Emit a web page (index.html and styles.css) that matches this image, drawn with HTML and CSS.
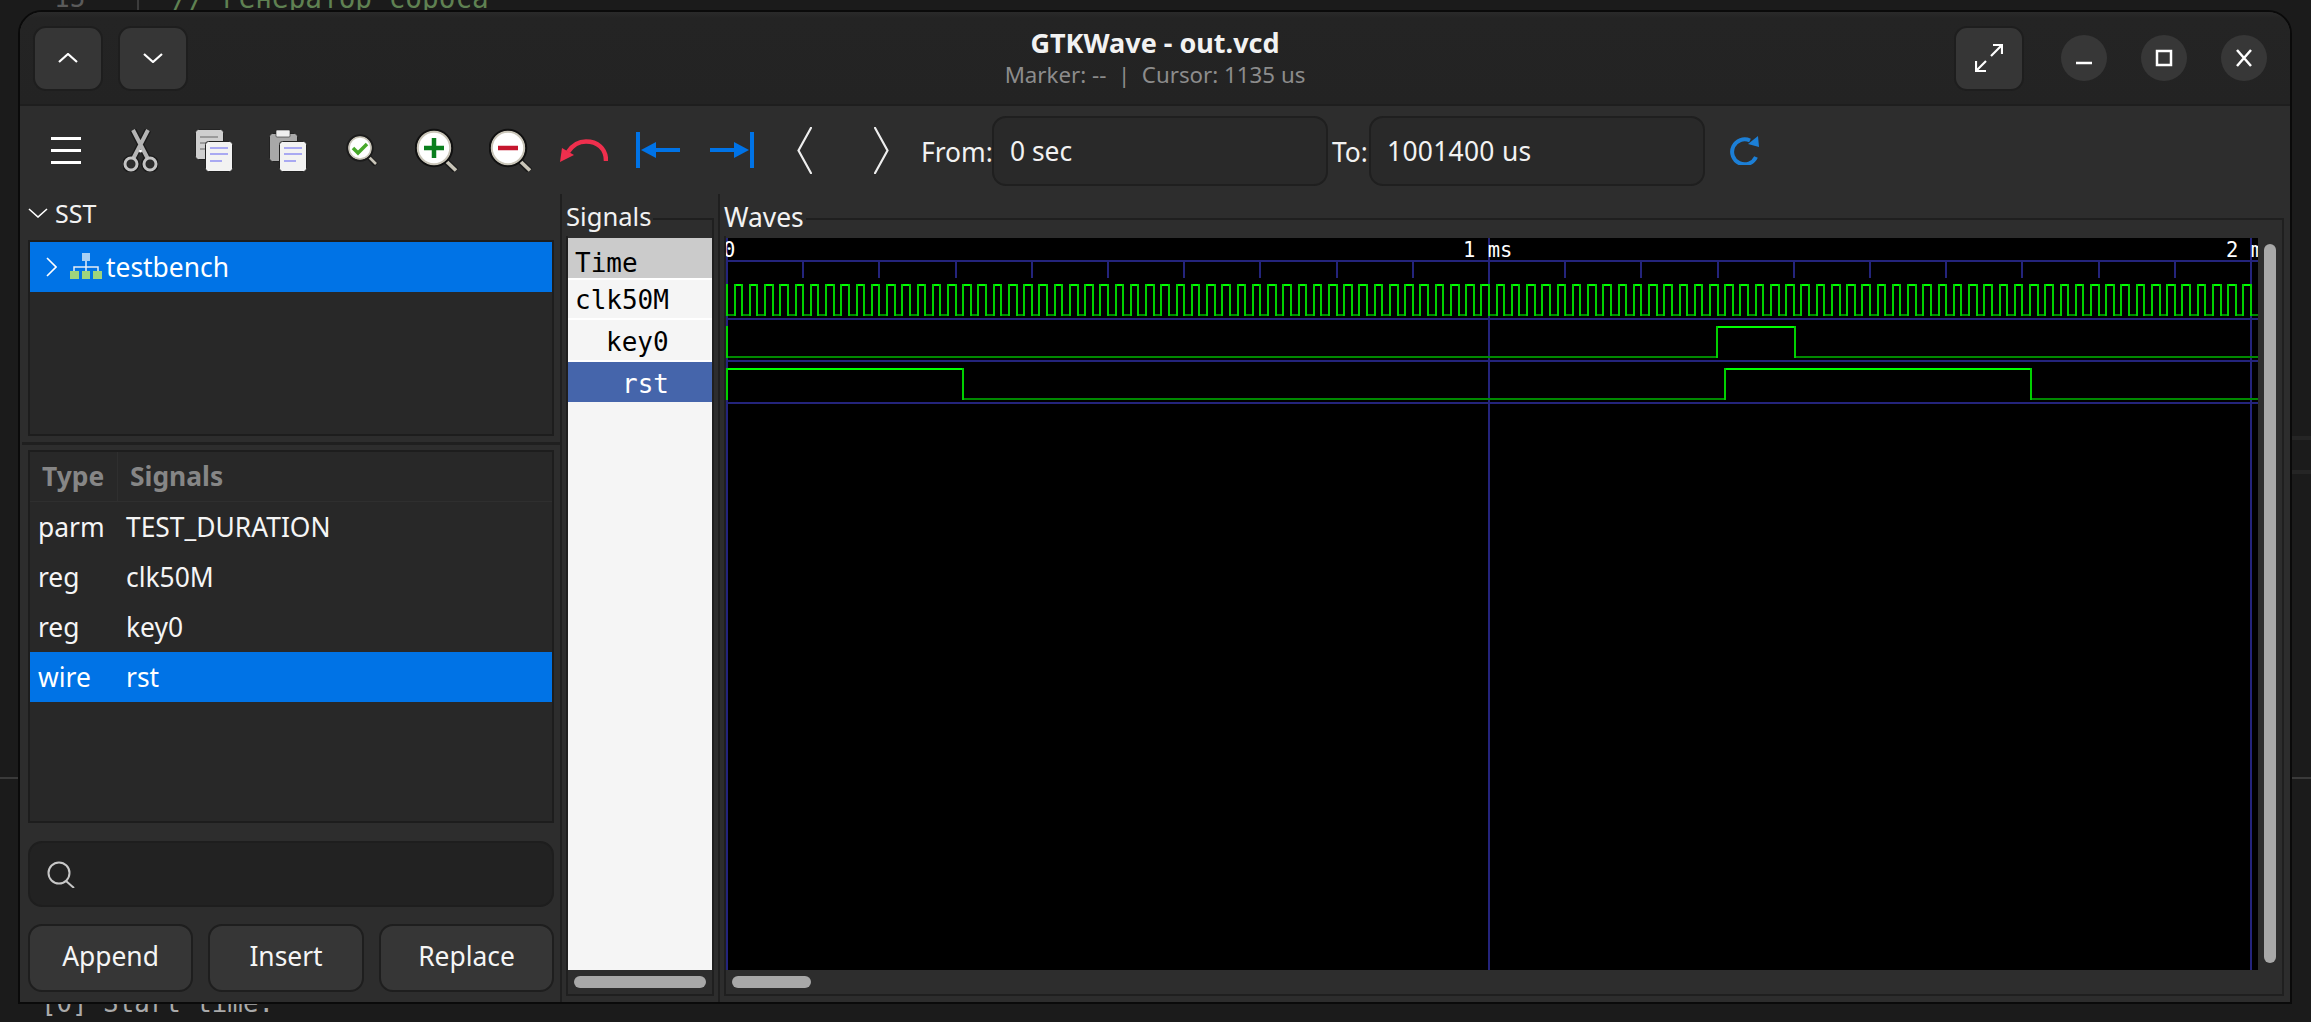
FILE: index.html
```html
<!DOCTYPE html>
<html lang="en">
<head>
    <meta charset="UTF-8">
    <title>GTKWave - out.vcd</title>
    <link rel="stylesheet" href="styles.css">
</head>
<body>

    <!-- Editor behind the window -->
    <div class="behind behind-num">15</div>
    <div class="behind behind-bar"></div>
    <div class="behind behind-comment">// генератор сброса</div>
    <div class="behind behind-log">[0] Start time.</div>
    <div class="behind rule rule-left"></div>
    <div class="behind rule rule-right"></div>
    <div class="behind rule-faint rule-faint-a"></div>
    <div class="behind rule-faint rule-faint-b"></div>

    <div class="window">
        <header class="titlebar">
            <div class="titlebar-left">
                <button class="head-btn"><svg width="20" height="10" viewBox="0 0 20 10"><path d="M1 9 10 1l9 8" class="line"/></svg></button>
                <button class="head-btn"><svg width="20" height="10" viewBox="0 0 20 10"><path d="M1 1l9 8 9-8" class="line"/></svg></button>
            </div>
            <div class="title">
                <div class="title-main">GTKWave - out.vcd</div>
                <div class="title-sub">Marker: -- &nbsp;|&nbsp; Cursor: 1135 us</div>
            </div>
            <div class="titlebar-right">
                <button class="head-btn head-btn-fs"><svg width="28" height="28" viewBox="0 0 28 28"><path d="M16 12 27 1M18 1h9v9M11 17 1 27M1 17v10h10" class="line"/></svg></button>
                <div class="win-btns">
                    <button class="win-btn"><svg width="18" height="18" viewBox="0 0 18 18"><path d="M1 14h16" class="line thick"/></svg></button>
                    <button class="win-btn"><svg width="18" height="18" viewBox="0 0 18 18"><path d="M2 2h14v14H2z" class="line thick"/></svg></button>
                    <button class="win-btn"><svg width="18" height="18" viewBox="0 0 18 18"><path d="M2 1l14 16M16 1 2 17" class="line thick"/></svg></button>
                </div>
            </div>
        </header>

        <div class="toolbar">
            <div class="tool"><svg width="30" height="27" viewBox="0 0 30 27"><path d="M0 1.5h30M0 13.5h30M0 25.5h30" class="line thick3"/></svg></div>
            <div class="tool">
                <svg width="35" height="43" viewBox="0 0 35 43">
                    <path d="M10 1 25 30M25 1 10 30" stroke="#1c1c1c" stroke-width="7" fill="none"/>
                    <circle cx="8" cy="35" r="6.5" fill="none" stroke="#1c1c1c" stroke-width="5"/>
                    <circle cx="27" cy="35" r="6.5" fill="none" stroke="#1c1c1c" stroke-width="5"/>
                    <path d="M10 1 25 30M25 1 10 30" stroke="#b4b4b4" stroke-width="4" fill="none"/>
                    <circle cx="8" cy="35" r="6" fill="none" stroke="#c4c4c4" stroke-width="3"/>
                    <circle cx="27" cy="35" r="6" fill="none" stroke="#c4c4c4" stroke-width="3"/>
                    <circle cx="17.5" cy="22" r="1.5" fill="#fff"/>
                </svg>
            </div>
            <div class="tool">
                <svg width="38" height="43" viewBox="0 0 38 43">
                    <rect x="0.5" y="0.5" width="28" height="30" rx="3" fill="#cfcfcf" stroke="#222"/>
                    <path d="M5 8h18M5 14h10M5 20h6" stroke="#9a9a9a" stroke-width="2"/>
                    <rect x="10.5" y="12.5" width="27" height="30" rx="3" fill="#f2f2f2" stroke="#222"/>
                    <path d="M15 19h18M15 25h18M15 32h12" stroke="#a9a9f2" stroke-width="2"/>
                </svg>
            </div>
            <div class="tool">
                <svg width="38" height="43" viewBox="0 0 38 43">
                    <rect x="0.5" y="4.5" width="28" height="28" rx="3" fill="#a8a8a8" stroke="#222"/>
                    <rect x="7" y="1" width="14" height="7" rx="1" fill="#eee" stroke="#222" stroke-width="0.6"/>
                    <rect x="10.5" y="12.5" width="27" height="30" rx="3" fill="#f2f2f2" stroke="#222"/>
                    <path d="M15 19h18M15 25h18M15 32h12" stroke="#a9a9f2" stroke-width="2"/>
                </svg>
            </div>
            <div class="tool">
                <svg width="32" height="32" viewBox="0 0 32 32">
                    <path d="M21 21 30 31" stroke="#1c1c1c" stroke-width="5"/>
                    <path d="M21 21 30 30" stroke="#c9c5b8" stroke-width="2.6"/>
                    <circle cx="14" cy="14" r="12.5" fill="#fff" stroke="#1c1c1c" stroke-width="2.5"/>
                    <circle cx="14" cy="14" r="11" fill="#fff" stroke="#c9c5b8" stroke-width="1.6"/>
                    <path d="M7 14l5 5 9-9" fill="none" stroke="#47a82a" stroke-width="3.5"/>
                </svg>
            </div>
            <div class="tool">
                <svg width="43" height="44" viewBox="0 0 43 44">
                    <path d="M30 32 41 43" stroke="#1c1c1c" stroke-width="6.5"/>
                    <path d="M30 32 41 42.500" stroke="#c9c5b8" stroke-width="3.600"/>
                    <circle cx="19" cy="20" r="18" fill="#fff" stroke="#111" stroke-width="2.5"/>
                    <circle cx="19" cy="20" r="16.2" fill="#fff" stroke="#c9c5b8" stroke-width="2"/>
                    <path d="M9 20h20M19 10v20" stroke="#0a7f1e" stroke-width="4.5"/>
                </svg>
            </div>
            <div class="tool">
                <svg width="43" height="44" viewBox="0 0 43 44">
                    <path d="M30 32 41 43" stroke="#1c1c1c" stroke-width="6.5"/>
                    <path d="M30 32 41 42.500" stroke="#c9c5b8" stroke-width="3.600"/>
                    <circle cx="19" cy="20" r="18" fill="#fff" stroke="#111" stroke-width="2.5"/>
                    <circle cx="19" cy="20" r="16.2" fill="#fff" stroke="#c9c5b8" stroke-width="2"/>
                    <path d="M9 20h20" stroke="#c5162e" stroke-width="4.5"/>
                </svg>
            </div>
            <div class="tool">
                <svg width="48" height="23" viewBox="0 0 48 23">
                    <path d="M46 22C46 9 37 2.500 26 2.500 18 2.500 12 7 8 13" fill="none" stroke="#ef2f4d" stroke-width="4.500"/>
                    <path d="M0 23 2 9 14 16z" fill="#ef2f4d"/>
                </svg>
            </div>
            <div class="tool">
                <svg width="44" height="36" viewBox="0 0 44 36"><path d="M0 0h4v36H0zM5 18l15-8v6h24v4H20v6z" fill="#0073e6"/></svg>
            </div>
            <div class="tool">
                <svg width="44" height="36" viewBox="0 0 44 36"><path d="M44 0h-4v36h4zM39 18l-15-8v6H0v4h24v6z" fill="#0073e6"/></svg>
            </div>
            <div class="tool tool-nav tool-prev"><svg width="15" height="47" viewBox="0 0 15 47"><path d="M14.500 0 1.500 23.500 14.500 47" fill="none" stroke="#eee" stroke-width="2.200"/></svg></div>
            <div class="tool tool-nav"><svg width="15" height="47" viewBox="0 0 15 47"><path d="M0.500 0 13.500 23.500 0.500 47" fill="none" stroke="#eee" stroke-width="2.200"/></svg></div>
            <span class="range-label range-from">From:</span>
            <div class="entry">0 sec</div>
            <span class="range-label range-to">To:</span>
            <div class="entry entry-to">1001400 us</div>
            <div class="reload">
                <svg width="30" height="30" viewBox="0 0 30 30">
                    <path d="M21 5.500A12.500 12.500 0 1 0 27 22" fill="none" stroke="#1c7fd6" stroke-width="4"/>
                    <path d="M19 9 29 1l1 11z" fill="#1c7fd6"/>
                </svg>
            </div>
        </div>

        <div class="panes">
            <aside class="sst-pane">
                <div class="sst-head">
                    <svg width="20" height="10" viewBox="0 0 20 10"><path d="M1 1l9 8 9-8" class="line thin"/></svg>
                    <span>SST</span>
                </div>
                <div class="tree-frame">
                    <div class="tree-row">
                        <svg class="tree-arrow" width="11" height="20" viewBox="0 0 11 20"><path d="M1 1l9 9-9 9" class="line thin"/></svg>
                        <svg class="tree-icon" width="32" height="26" viewBox="0 0 32 26">
                            <rect x="12" y="0" width="8" height="8" fill="#a8d0f4"/>
                            <path d="M16 8v5M4 18v-4h24v4M16 13v5" stroke="#e8eef5" stroke-width="1.500" fill="none"/>
                            <rect x="0" y="18" width="9" height="8" fill="#9ed47c"/>
                            <rect x="12" y="18" width="8" height="8" fill="#9ed47c"/>
                            <rect x="23" y="18" width="9" height="8" fill="#9ed47c"/>
                        </svg>
                        <span>testbench</span>
                    </div>
                </div>
                <div class="pane-rule"></div>
                <div class="sig-frame">
                    <div class="sig-head">
                        <div class="sig-head-type">Type</div>
                        <div class="sig-head-name">Signals</div>
                    </div>
                    <div class="sig-row"><span>parm</span><span>TEST_DURATION</span></div>
                    <div class="sig-row"><span>reg</span><span>clk50M</span></div>
                    <div class="sig-row"><span>reg</span><span>key0</span></div>
                    <div class="sig-row sig-row-on"><span>wire</span><span>rst</span></div>
                </div>
                <div class="search">
                    <svg width="28" height="27" viewBox="0 0 28 27">
                        <circle cx="12" cy="12" r="10.500" fill="none" stroke="#c8c8c8" stroke-width="2"/>
                        <path d="M19 20l8 7" stroke="#c8c8c8" stroke-width="2"/>
                    </svg>
                </div>
                <div class="sst-actions">
                    <button class="action">Append</button>
                    <button class="action">Insert</button>
                    <button class="action">Replace</button>
                </div>
            </aside>

            <section class="names-pane">
                <div class="frame">
                    <span class="frame-label">Signals</span>
                    <div class="names">
                        <div class="name name-time">Time</div>
                        <div class="name name-clk">clk50M</div>
                        <div class="name name-key">key0</div>
                        <div class="name name-rst">rst</div>
                    </div>
                    <div class="hscroll"><div class="thumb-h thumb-names"></div></div>
                </div>
            </section>

            <section class="waves-pane">
                <div class="frame waves-frame">
                    <span class="frame-label">Waves</span>
                    <svg id="waves" class="waves" width="1532" height="732" viewBox="0 0 1532 732">
                        <g id="grid" stroke="#24247c" stroke-width="2"></g>
                        <path d="M0 23h1532M0 81h1532M0 123h1532M0 165h1532M1 0v732M763 0v732M1525 0v732" stroke="#24247c" stroke-width="2" fill="none"/>
                        <path id="clkHigh" class="wave-high"/>
                        <path id="clkLow" class="wave-low"/>
                        <path id="clkEdge" class="wave-edge"/>
                        <!-- key0 -->
                        <path d="M991 89h78" class="wave-high"/>
                        <path d="M1 119h990M1069 119h463" class="wave-low"/>
                        <path d="M1 88v32M991 120V88M1069 88v32" class="wave-edge"/>
                        <!-- rst -->
                        <path d="M1 131h236M999 131h306" class="wave-high"/>
                        <path d="M237 161h762M1305 161h227" class="wave-low"/>
                        <path d="M1 130v32M237 130v32M999 162v-32M1305 130v32" class="wave-edge"/>
                        <text x="-3" y="19" class="tick-label">0</text>
                        <text x="737" y="19" class="tick-label">1 ms</text>
                        <text x="1500" y="19" class="tick-label">2 ms</text>
                    </svg>
                    <div class="vscroll"><div class="thumb-v"></div></div>
                    <div class="hscroll"><div class="thumb-h thumb-waves"></div></div>
                </div>
            </section>
        </div>
    </div>

    <script src="wave.js"></script>
</body>
</html>
```

FILE: styles.css
```css
* { box-sizing: border-box; }

body {
    margin: 0; width: 2311px; height: 1022px; overflow: hidden;
    background: #1b1b1b; color: #fff;
    font-family: "Noto Sans", sans-serif; font-size: 26.400px;
}

button { font: inherit; color: inherit; padding: 0; }

/* Editor behind the window */
.behind { position: absolute; font-family: "DejaVu Sans Mono", monospace; white-space: pre; line-height: 32px; }
.behind-num { left: 54px; top: -18px; font-size: 26px; color: #5a5a5a; }
.behind-bar { left: 137px; top: 0; width: 2px; height: 11px; background: #3c3c3c; }
.behind-comment { left: 172px; top: -17px; font-size: 27.700px; color: #5f8152; }
.behind-log { left: 41px; top: 987px; font-size: 25.800px; color: #aaaaaa; }
.rule { top: 777px; height: 2px; background: #3a3a3a; }
.rule-left { left: 0; width: 18px; }
.rule-right { left: 2292px; width: 19px; }
.rule-faint { left: 2292px; width: 19px; height: 4px; background: #252525; }
.rule-faint-a { top: 436px; }
.rule-faint-b { top: 470px; }

/* Window */
.window {
    position: absolute; left: 18px; top: 10px; width: 2274px; height: 994px;
    border: 2px solid #0a0a0a; border-radius: 24px 24px 0 0;
    background: #2d2d2d; display: flex; flex-direction: column; overflow: hidden;
}

.titlebar {
    height: 94px; flex: none; padding: 0 23px;
    background: linear-gradient(to bottom, #2a2a2a, #242424 6px, #232323);
    border-bottom: 2px solid #1e1e1e;
    display: grid; grid-template-columns: 1fr auto 1fr; align-items: center;
}
.titlebar-left { display: flex; gap: 15px; margin-left: -10px; }
.titlebar-right { display: flex; justify-content: flex-end; align-items: center; }
.head-btn {
    width: 70px; height: 65px; border: 2px solid #1e1e1e; border-radius: 13px;
    background: #363636; display: flex; align-items: center; justify-content: center;
}
.win-btns { display: flex; gap: 33.500px; margin-left: 37px; }
.win-btn {
    width: 46.500px; height: 46.500px; border: none; border-radius: 50%;
    background: #373737; display: flex; align-items: center; justify-content: center;
}
.line { fill: none; stroke: #fff; stroke-width: 2.200; }
.line.thick { stroke-width: 2.500; }
.line.thick3 { stroke-width: 3; }
.line.thin { stroke-width: 1.600; }

.title { text-align: center; }
.title-main { font-weight: 700; font-size: 27px; line-height: 34px; color: #f2f2f2; }
.title-sub { font-size: 22.300px; line-height: 30px; color: #8c8c8c; }

/* Toolbar */
.toolbar { height: 88px; flex: none; padding-left: 9px; display: flex; align-items: center; }
.tool { width: 74px; flex: none; display: flex; align-items: center; justify-content: center; }
.tool-nav { width: 77px; }
.tool-prev { margin-left: -3px; }
.range-label { flex: none; color: #f2f2f2; margin-top: 4px; }
.range-from { width: 71px; margin-left: 1px; }
.range-to { width: 37px; margin-left: 4px; }
.entry {
    width: 336px; height: 70px; margin-top: 2px; padding-left: 16px; flex: none;
    border: 2px solid #1f1f1f; border-radius: 14px; background: #292929;
    color: #f2f2f2; display: flex; align-items: center;
}
.entry-to { letter-spacing: 0.300px; }
.reload { margin-left: 24px; display: flex; }

/* Panes */
.panes { flex: 1; display: flex; min-height: 0; }

.sst-pane {
    width: 542px; flex: none; padding: 0 6px 10px 8px;
    border-right: 2px solid #1f1f1f; display: flex; flex-direction: column;
}
.sst-head { height: 38px; flex: none; margin-bottom: 8px; display: flex; align-items: center; gap: 7px; color: #f2f2f2; font-size: 25px; }
.tree-frame { height: 196px; flex: none; border: 2px solid #1d1d1d; background: #282828; }
.tree-row { height: 50px; background: #0073e6; display: flex; align-items: center; color: #fff; }
.tree-arrow { margin-left: 16px; }
.tree-icon { margin: -2px 4px 0 13px; }
.pane-rule { height: 3px; flex: none; margin: 6px -6px 5px -6px; background: #1f1f1f; }

.sig-frame { height: 373px; flex: none; border: 2px solid #1d1d1d; background: #282828; }
.sig-head {
    height: 50px; display: grid; grid-template-columns: 88px 1fr;
    border-bottom: 1px solid #2f2f2f; font-weight: 700; color: #868686; line-height: 48px;
}
.sig-head-type { padding-left: 12px; border-right: 1px solid #2f2f2f; }
.sig-head-name { padding-left: 12px; }
.sig-row { height: 50px; padding-left: 8px; display: grid; grid-template-columns: 88px 1fr; line-height: 50px; color: #f5f5f5; }
.sig-row-on { background: #0073e6; color: #fff; }

.search {
    height: 66px; flex: none; margin-top: 18px; padding-left: 17px;
    border: 2px solid #1e1e1e; border-radius: 14px; background: #222222;
    display: flex; align-items: center;
}
.sst-actions { flex: none; margin-top: 17px; display: grid; grid-template-columns: 165px 156px 175px; gap: 15px; }
.action { height: 68px; padding-bottom: 4px; border: 2px solid #1e1e1e; border-radius: 14px; background: #363636; color: #f5f5f5; }

.names-pane { width: 158px; flex: none; padding: 24px 4px 6px; border-right: 2px solid #1f1f1f; }
.waves-pane { flex: 1; padding: 24px 6px 6px 4px; }

.frame { position: relative; height: 100%; padding-top: 18px; border: 2px solid #1f1f1f; display: flex; flex-direction: column; }
.frame-label {
    position: absolute; left: -2px; top: -19px; height: 35px; padding-right: 2px;
    line-height: 32px; background: #2d2d2d; color: #f2f2f2;
}
.names-pane .frame-label { font-size: 25.600px; }
.names {
    height: 732px; flex: none; background: #f5f5f5; color: #000;
    font-family: "DejaVu Sans Mono", monospace; font-size: 26px;
}
.name { height: 42px; padding: 4px 0 0 38px; line-height: 36px; border-bottom: 2px solid #ffffff; }
.name-time { padding: 7px 0 0 7px; background: #cbcbcb; }
.name-clk { height: 40px; padding: 2px 0 0 7px; }
.name-rst { height: 40px; padding-left: 54px; background: #4565ab; color: #fff; border-bottom: none; }

.hscroll { height: 24px; flex: none; padding: 6px; }
.thumb-h { height: 12px; border-radius: 6px; background: #a8a8a8; }
.thumb-waves { width: 79px; }

.waves-frame { display: grid; grid-template-columns: 1532px 24px; grid-template-rows: 732px 24px; }
.waves { display: block; background: #000; overflow: hidden; }
.vscroll { padding: 6px 6px 7px; }
.thumb-v { height: 719px; border-radius: 6px; background: #a8a8a8; }

/* Wave canvas */
.wave-high { fill: none; stroke: #00ff00; stroke-width: 2; }
.wave-low { fill: none; stroke: #008a00; stroke-width: 2; }
.wave-edge { fill: none; stroke: #00d000; stroke-width: 2; }
.tick-label { font-family: "DejaVu Sans Mono", monospace; font-size: 20.500px; fill: #fff; white-space: pre; }
```

FILE: wave.js
```js
// 50 clock periods per ms, one ms is 762px on the canvas
var PERIOD = 15.24;
var START = 1;

function build() {
    var high = '', low = '', edge = '';
    for (var i = 0; i < 100; i++) {
        var rise = Math.round(START + PERIOD / 2 + i * PERIOD);
        var fall = Math.round(START + PERIOD + i * PERIOD);
        var next = Math.round(START + PERIOD * 1.5 + i * PERIOD);
        if (rise > 1526) break;
        high += 'M' + rise + ' 47H' + Math.min(fall, 1526);
        if (fall < 1526) {
            low += 'M' + fall + ' 77H' + Math.min(next, 1532);
            edge += 'M' + fall + ' 46V78';
        }
        edge += 'M' + rise + ' 78V46';
    }
    // starts low for the first half period
    edge = 'M1 46V78' + edge;
    low = 'M1 77H' + Math.round(START + PERIOD / 2) + low;
    document.getElementById('clkHigh').setAttribute('d', high);
    document.getElementById('clkLow').setAttribute('d', low);
    document.getElementById('clkEdge').setAttribute('d', edge);

    var ticks = '';
    for (var n = 1; n < 20; n++) {
        if (n === 10) continue;
        var x = Math.round(1 + n * 76.2);
        ticks += '<line x1="' + x + '" x2="' + x + '" y1="24" y2="40"></line>';
    }
    document.getElementById('grid').innerHTML = ticks;
}

build();
```
